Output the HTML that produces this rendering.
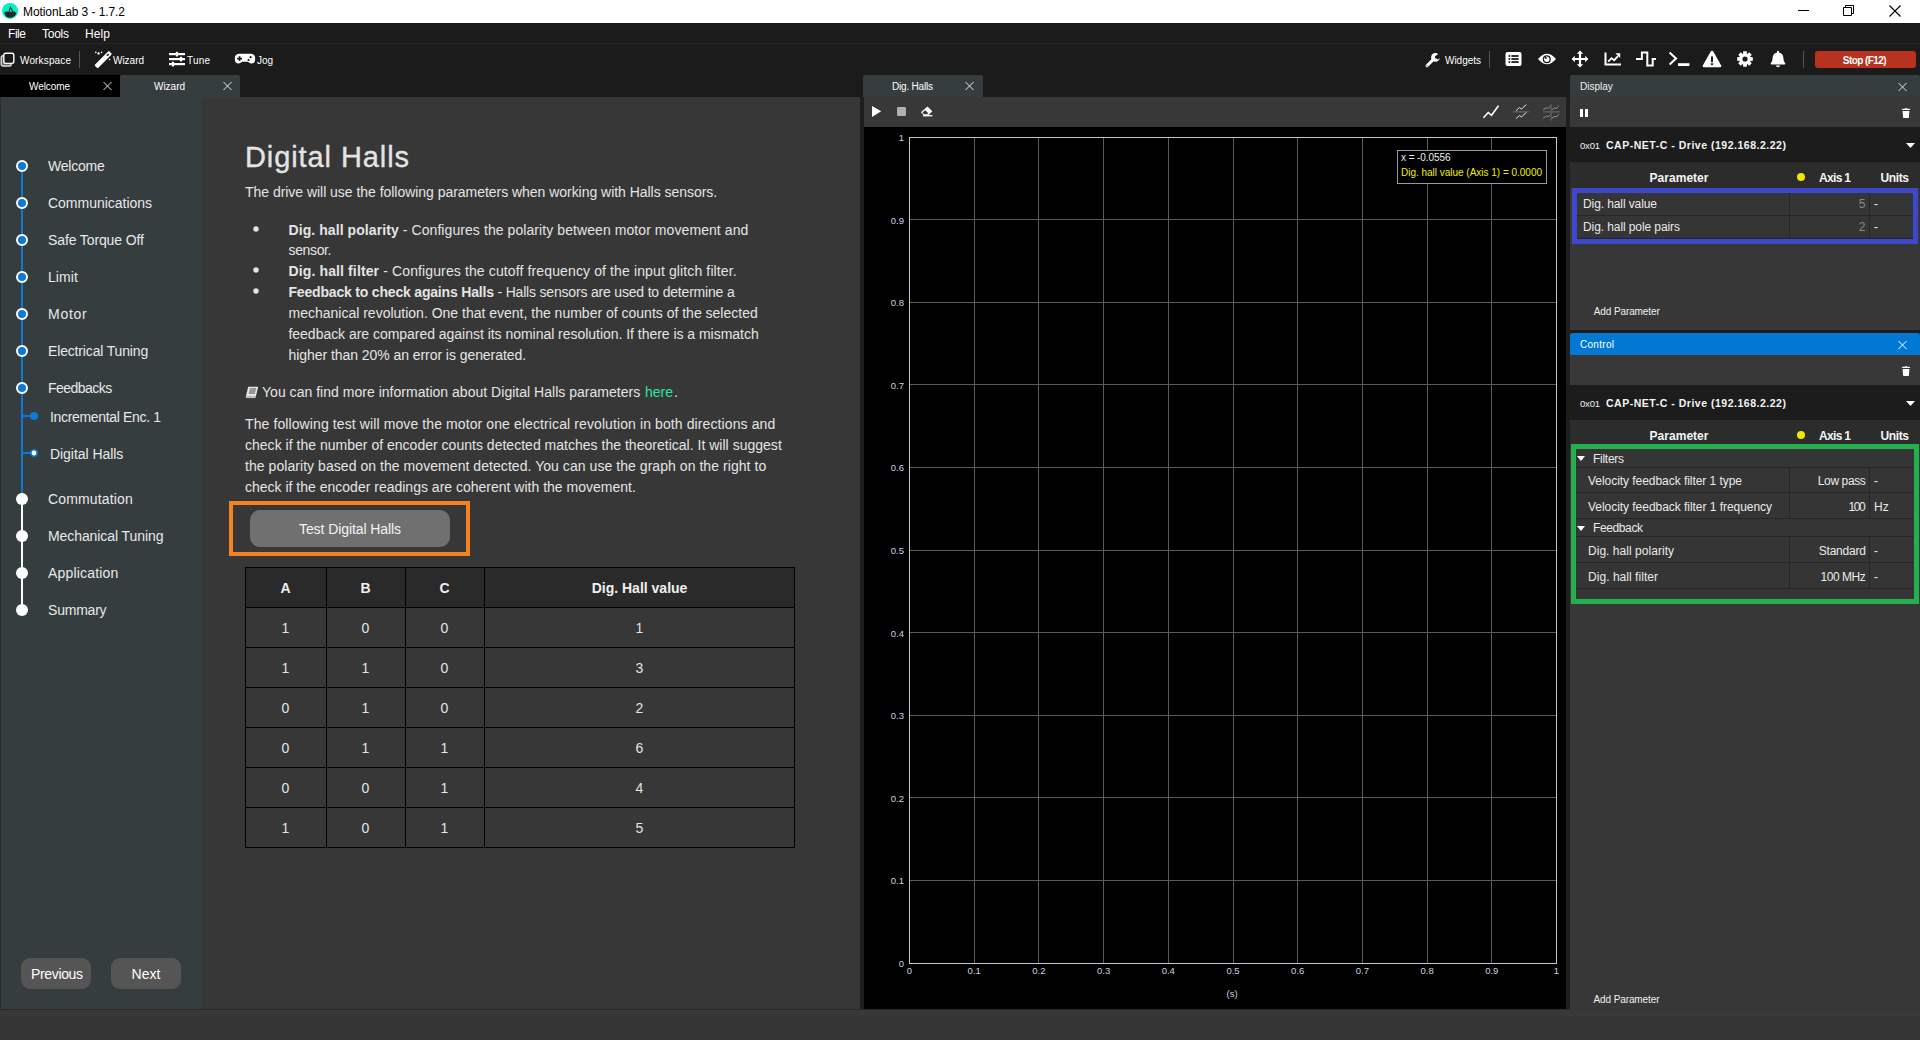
<!DOCTYPE html>
<html><head><meta charset="utf-8">
<style>
*{margin:0;padding:0;box-sizing:border-box}
html,body{width:1920px;height:1040px;overflow:hidden;background:#353535;font-family:"Liberation Sans",sans-serif;color:#e6e6e6}
.a{position:absolute}
.t{position:absolute;white-space:nowrap;line-height:1}
svg{position:absolute;overflow:visible}
b{font-weight:bold}
</style></head><body>
<div class="a" style="left:0px;top:0px;width:1920px;height:23px;background:#fff;"></div>
<svg style="left:2px;top:3px" width="16" height="16" viewBox="0 0 16 16"><circle cx="8" cy="7.9" r="8" fill="#00f0c2"/><path d="M2.2 9.4 L4.4 8.4 L6.5 8.7 L8.4 3.0 L11.5 8.7 L12.9 8.6 L13.3 9.6 L14.6 9.9 Q12.8 14.6 8 14.8 Q3.4 14.6 2.2 9.4Z" fill="#2a2627"/><path d="M8.5 5.6 L10.2 8.7 L7.4 8.7Z" fill="#00f0c2"/></svg>
<div class="t" style="left:23.00px;top:5.84px;font-size:12px;color:#000;letter-spacing:-0.076px;">MotionLab 3 - 1.7.2</div>
<div class="a" style="left:1798px;top:10px;width:11px;height:1px;background:#000;"></div>
<svg style="left:1843px;top:5px" width="12" height="12" viewBox="0 0 12 12"><path d="M0.5 2.5h8v8h-8z M2.5 2.5v-2h8v8h-2" fill="none" stroke="#000" stroke-width="1"/></svg>
<svg style="left:1889px;top:5px" width="12" height="12" viewBox="0 0 12 12"><path d="M0.5 0.5L11.5 11.5M11.5 0.5L0.5 11.5" stroke="#000" stroke-width="1.1"/></svg>
<div class="a" style="left:0px;top:23px;width:1920px;height:21px;background:#1b1b1b;"></div>
<div class="t" style="left:8.00px;top:27.84px;font-size:12px;color:#fff;letter-spacing:-0.448px;">File</div>
<div class="t" style="left:42.00px;top:27.84px;font-size:12px;color:#fff;letter-spacing:-0.254px;">Tools</div>
<div class="t" style="left:85.00px;top:27.84px;font-size:12px;color:#fff;letter-spacing:0.104px;">Help</div>
<div class="a" style="left:0px;top:43px;width:1920px;height:1px;background:#262626;"></div>
<div class="a" style="left:0px;top:44px;width:1920px;height:53px;background:#1b1b1b;"></div>
<svg style="left:0px;top:52px" width="16" height="16" viewBox="0 0 16 16"><rect x="1.2" y="3.8" width="10" height="10.2" rx="1.8" fill="#666" stroke="#ddd" stroke-width="1.4"/><rect x="3.8" y="1.2" width="10" height="10.2" rx="1.8" fill="#1b1b1b" stroke="#fff" stroke-width="1.4"/></svg>
<div class="t" style="left:20.00px;top:55.53px;font-size:10px;color:#fff;letter-spacing:0.146px;">Workspace</div>
<div class="a" style="left:79px;top:51px;width:1px;height:17px;background:#555;"></div>
<svg style="left:94px;top:50px" width="18" height="18" viewBox="0 0 18 18"><g transform="rotate(-45 9.2 9.6)"><rect x="-1" y="7.3" width="20.4" height="4.6" rx="1" fill="#fff"/><rect x="14.6" y="8.8" width="2.4" height="1.6" fill="#1b1b1b"/></g><circle cx="1.8" cy="2.4" r="0.8" fill="#fff"/><circle cx="4.6" cy="3.4" r="1.2" fill="#fff"/><circle cx="7.6" cy="2.4" r="0.8" fill="#fff"/><circle cx="15.6" cy="9.6" r="0.8" fill="#fff"/></svg>
<div class="t" style="left:113.00px;top:55.53px;font-size:10px;color:#fff;letter-spacing:-0.022px;">Wizard</div>
<svg style="left:168px;top:50px" width="18" height="18" viewBox="0 0 18 18"><rect x="1" y="3" width="16" height="2.2" fill="#fff"/><rect x="1" y="8" width="16" height="2.2" fill="#fff"/><rect x="1" y="13" width="16" height="2.2" fill="#fff"/><rect x="7.8" y="1.8" width="2.3" height="4.6" rx="0.6" fill="#fff"/><rect x="11.9" y="6.8" width="2.3" height="4.6" rx="0.6" fill="#fff"/><rect x="3.8" y="11.8" width="2.3" height="4.6" rx="0.6" fill="#fff"/></svg>
<div class="t" style="left:187.00px;top:55.53px;font-size:10px;color:#fff;letter-spacing:0.193px;">Tune</div>
<svg style="left:234px;top:53px" width="22" height="12" viewBox="0 0 22 12"><path d="M5.5 0.8 H16.5 Q21.2 0.8 21.2 5.4 Q21.2 10.6 17.4 10.6 Q15.4 10.6 14 8.8 H8 Q6.6 10.6 4.6 10.6 Q0.8 10.6 0.8 5.4 Q0.8 0.8 5.5 0.8Z" fill="#fff"/><path d="M5.6 3.2v4.8M3.2 5.6h4.8" stroke="#1b1b1b" stroke-width="1.6"/><circle cx="16.6" cy="4.2" r="1.1" fill="#1b1b1b"/><circle cx="14.6" cy="7" r="1.1" fill="#1b1b1b"/></svg>
<div class="t" style="left:257.00px;top:55.53px;font-size:10px;color:#fff;letter-spacing:-0.062px;">Jog</div>
<svg style="left:1424px;top:51.8px" width="17" height="17" viewBox="0 0 17 17"><path d="M3 13.8 L9.4 7.4" stroke="#fff" stroke-width="3" stroke-linecap="round"/><circle cx="11.4" cy="5.4" r="4.3" fill="#fff"/><path d="M11 5 L14.4 1.6 L17.2 4.4 L13.8 7.8Z" fill="#1b1b1b"/><circle cx="12.3" cy="4.9" r="1.5" fill="#1b1b1b"/><circle cx="3" cy="13.8" r="0.6" fill="#1b1b1b"/></svg>
<div class="t" style="left:1445.00px;top:55.53px;font-size:10px;color:#fff;letter-spacing:-0.021px;">Widgets</div>
<div class="a" style="left:1489px;top:51px;width:1px;height:17px;background:#555;"></div>
<svg style="left:1505px;top:52px" width="17" height="14" viewBox="0 0 17 14"><rect x="0.5" y="0" width="16" height="14" rx="2" fill="#fff"/><circle cx="4.4" cy="4" r="1" fill="#1b1b1b"/><circle cx="4.4" cy="7" r="1" fill="#1b1b1b"/><circle cx="4.4" cy="10" r="1" fill="#1b1b1b"/><rect x="6.4" y="3.1" width="7.2" height="1.8" fill="#1b1b1b"/><rect x="6.4" y="6.1" width="7.2" height="1.8" fill="#1b1b1b"/><rect x="6.4" y="9.1" width="7.2" height="1.8" fill="#1b1b1b"/></svg>
<svg style="left:1537px;top:52px" width="20" height="14" viewBox="0 0 20 14"><path d="M1 7 Q10 -3.5 19 7 Q10 17.5 1 7Z" fill="#fff"/><circle cx="9.8" cy="7.2" r="4" fill="#1b1b1b"/><circle cx="9.8" cy="7.2" r="2.7" fill="#fff"/><circle cx="8.8" cy="6" r="1" fill="#1b1b1b"/></svg>
<svg style="left:1571px;top:50px" width="18" height="18" viewBox="0 0 18 18"><path d="M9 0.6 L12.2 3.8 H10.1 V7.9 H14.2 V5.8 L17.4 9 L14.2 12.2 V10.1 H10.1 V14.2 H12.2 L9 17.4 L5.8 14.2 H7.9 V10.1 H3.8 V12.2 L0.6 9 L3.8 5.8 V7.9 H7.9 V3.8 H5.8Z" fill="#fff"/></svg>
<svg style="left:1604px;top:52px" width="18" height="14" viewBox="0 0 18 14"><path d="M1.5 0.5 V12.5 H17" fill="none" stroke="#fff" stroke-width="2"/><path d="M4.2 9.6 L7.6 6.2 L10.2 8.2 L14 4.2" fill="none" stroke="#fff" stroke-width="1.8"/><path d="M11.4 1.2 H16.2 V6 Z" fill="#fff"/></svg>
<svg style="left:1635px;top:51px" width="22" height="16" viewBox="0 0 22 16"><path d="M1 7.9 H6.9 V1.5 H12.3 V14.5 H17.7 V8.1 H21" fill="none" stroke="#fff" stroke-width="2"/></svg>
<svg style="left:1668px;top:51px" width="22" height="16" viewBox="0 0 22 16"><path d="M1.6 1.6 L8 7.6 L1.6 13.6" fill="none" stroke="#fff" stroke-width="2.1"/><rect x="10" y="12.2" width="11.4" height="2.8" fill="#fff"/></svg>
<svg style="left:1702px;top:50px" width="20" height="18" viewBox="0 0 20 18"><path d="M10 0.8 Q10.8 0.8 11.3 1.6 L19.2 15.4 Q19.8 17 18.3 17.2 H1.7 Q0.2 17 0.8 15.4 L8.7 1.6 Q9.2 0.8 10 0.8Z" fill="#fff"/><rect x="9" y="6.2" width="2" height="6" rx="0.8" fill="#1b1b1b"/><circle cx="10" cy="14.2" r="1.1" fill="#1b1b1b"/></svg>
<svg style="left:1737px;top:51px" width="16" height="16" viewBox="0 0 16 16"><path d="M15.81 6.25 L15.81 9.75 L13.24 9.97 L13.10 10.31 L14.76 12.29 L12.29 14.76 L10.31 13.10 L9.97 13.24 L9.75 15.81 L6.25 15.81 L6.03 13.24 L5.69 13.10 L3.71 14.76 L1.24 12.29 L2.90 10.31 L2.76 9.97 L0.19 9.75 L0.19 6.25 L2.76 6.03 L2.90 5.69 L1.24 3.71 L3.71 1.24 L5.69 2.90 L6.03 2.76 L6.25 0.19 L9.75 0.19 L9.97 2.76 L10.31 2.90 L12.29 1.24 L14.76 3.71 L13.10 5.69 L13.24 6.03Z" fill="#fff"/><circle cx="8" cy="8" r="2.6" fill="#1b1b1b"/></svg>
<svg style="left:1770px;top:50px" width="16" height="18" viewBox="0 0 16 18"><path d="M8 0.8 Q9 0.8 9 2 V2.4 Q13.2 3.2 13.4 8 Q13.4 11.8 15.2 13.2 Q15.6 14.2 14.6 14.4 H1.4 Q0.4 14.2 0.8 13.2 Q2.6 11.8 2.6 8 Q2.8 3.2 7 2.4 V2 Q7 0.8 8 0.8Z" fill="#fff"/><path d="M5.8 15.4 H10.2 Q9.6 17.2 8 17.2 Q6.4 17.2 5.8 15.4Z" fill="#fff"/></svg>
<div class="a" style="left:1803px;top:51px;width:1px;height:17px;background:#555;"></div>
<div class="a" style="left:1815px;top:51px;width:101px;height:17px;background:#b8321f;border-radius:3px"></div>
<div class="t" style="left:1842.80px;top:55.83px;font-size:10px;color:#fff;letter-spacing:-0.566px;font-weight:bold;">Stop (F12)</div>
<div class="a" style="left:0px;top:75px;width:120px;height:22px;background:#000;"></div>
<div class="t" style="left:29.00px;top:81.53px;font-size:10px;color:#fff;letter-spacing:-0.081px;">Welcome</div>
<svg style="left:103px;top:81px" width="9" height="9" viewBox="0 0 9 9"><path d="M0.5 1L8.5 9M8.5 1L0.5 9" stroke="#e8e8e8" stroke-width="1.0"/></svg>
<div class="a" style="left:120px;top:75px;width:120px;height:22px;background:#363d3f;border-radius:2px 2px 0 0"></div>
<div class="t" style="left:154.00px;top:81.53px;font-size:10px;color:#fff;letter-spacing:-0.022px;">Wizard</div>
<svg style="left:223px;top:81px" width="9" height="9" viewBox="0 0 9 9"><path d="M0.5 1L8.5 9M8.5 1L0.5 9" stroke="#e8e8e8" stroke-width="1.0"/></svg>
<div class="a" style="left:0px;top:97px;width:860px;height:912px;background:#373737;"></div>
<div class="a" style="left:1px;top:97px;width:200px;height:912px;background:#363d3f;"></div>
<div class="a" style="left:0px;top:97px;width:1px;height:912px;background:#2b2b2b;"></div>
<div class="a" style="left:21px;top:166px;width:2px;height:327px;background:#0a7ad6;"></div>
<div class="a" style="left:21px;top:493px;width:2px;height:117px;background:#fff;"></div>
<svg style="left:16px;top:160px" width="12" height="12" viewBox="0 0 12 12"><circle cx="6" cy="6" r="5" fill="#0a7ad6" stroke="#fff" stroke-width="2"/></svg>
<div class="t" style="left:48.00px;top:159.15px;font-size:14px;color:#e8e8e8;letter-spacing:-0.213px;">Welcome</div>
<svg style="left:16px;top:197px" width="12" height="12" viewBox="0 0 12 12"><circle cx="6" cy="6" r="5" fill="#0a7ad6" stroke="#fff" stroke-width="2"/></svg>
<div class="t" style="left:48.00px;top:196.15px;font-size:14px;color:#e8e8e8;letter-spacing:-0.017px;">Communications</div>
<svg style="left:16px;top:234px" width="12" height="12" viewBox="0 0 12 12"><circle cx="6" cy="6" r="5" fill="#0a7ad6" stroke="#fff" stroke-width="2"/></svg>
<div class="t" style="left:48.00px;top:233.15px;font-size:14px;color:#e8e8e8;letter-spacing:-0.117px;">Safe Torque Off</div>
<svg style="left:16px;top:271px" width="12" height="12" viewBox="0 0 12 12"><circle cx="6" cy="6" r="5" fill="#0a7ad6" stroke="#fff" stroke-width="2"/></svg>
<div class="t" style="left:48.00px;top:270.15px;font-size:14px;color:#e8e8e8;letter-spacing:0.088px;">Limit</div>
<svg style="left:16px;top:308px" width="12" height="12" viewBox="0 0 12 12"><circle cx="6" cy="6" r="5" fill="#0a7ad6" stroke="#fff" stroke-width="2"/></svg>
<div class="t" style="left:48.00px;top:307.15px;font-size:14px;color:#e8e8e8;letter-spacing:0.734px;">Motor</div>
<svg style="left:16px;top:345px" width="12" height="12" viewBox="0 0 12 12"><circle cx="6" cy="6" r="5" fill="#0a7ad6" stroke="#fff" stroke-width="2"/></svg>
<div class="t" style="left:48.00px;top:344.15px;font-size:14px;color:#e8e8e8;letter-spacing:-0.155px;">Electrical Tuning</div>
<svg style="left:16px;top:382px" width="12" height="12" viewBox="0 0 12 12"><circle cx="6" cy="6" r="5" fill="#0a7ad6" stroke="#fff" stroke-width="2"/></svg>
<div class="t" style="left:48.00px;top:381.15px;font-size:14px;color:#e8e8e8;letter-spacing:-0.532px;">Feedbacks</div>
<svg style="left:16px;top:493px" width="12" height="12" viewBox="0 0 12 12"><circle cx="6" cy="6" r="6" fill="#fff"/></svg>
<div class="t" style="left:48.00px;top:492.15px;font-size:14px;color:#e8e8e8;letter-spacing:0.148px;">Commutation</div>
<svg style="left:16px;top:530px" width="12" height="12" viewBox="0 0 12 12"><circle cx="6" cy="6" r="6" fill="#fff"/></svg>
<div class="t" style="left:48.00px;top:529.15px;font-size:14px;color:#e8e8e8;letter-spacing:-0.080px;">Mechanical Tuning</div>
<svg style="left:16px;top:567px" width="12" height="12" viewBox="0 0 12 12"><circle cx="6" cy="6" r="6" fill="#fff"/></svg>
<div class="t" style="left:48.00px;top:566.15px;font-size:14px;color:#e8e8e8;letter-spacing:0.173px;">Application</div>
<svg style="left:16px;top:604px" width="12" height="12" viewBox="0 0 12 12"><circle cx="6" cy="6" r="6" fill="#fff"/></svg>
<div class="t" style="left:48.00px;top:603.15px;font-size:14px;color:#e8e8e8;letter-spacing:-0.212px;">Summary</div>
<div class="a" style="left:22px;top:415px;width:9px;height:2px;background:#0a7ad6;"></div>
<svg style="left:30px;top:412px" width="8" height="8" viewBox="0 0 8 8"><circle cx="4" cy="4" r="4" fill="#0a7ad6"/></svg>
<div class="t" style="left:50.00px;top:410.15px;font-size:14px;color:#e8e8e8;letter-spacing:-0.335px;">Incremental Enc. 1</div>
<div class="a" style="left:22px;top:452px;width:9px;height:2px;background:#0a7ad6;"></div>
<svg style="left:30px;top:449px" width="8" height="8" viewBox="0 0 8 8"><circle cx="4" cy="4" r="3.2" fill="#fff" stroke="#0a7ad6" stroke-width="1.6"/></svg>
<div class="t" style="left:50.00px;top:447.15px;font-size:14px;color:#e8e8e8;letter-spacing:-0.049px;">Digital Halls</div>
<div class="a" style="left:21px;top:958px;width:70px;height:31px;background:#555555;border-radius:9px"></div>
<div class="t" style="left:31.00px;top:967.15px;font-size:14px;color:#fff;letter-spacing:-0.350px;">Previous</div>
<div class="a" style="left:111px;top:958px;width:70px;height:31px;background:#555555;border-radius:9px"></div>
<div class="t" style="left:131.50px;top:967.15px;font-size:14px;color:#fff;letter-spacing:0.073px;">Next</div>
<div class="t" style="left:245.00px;top:142.65px;font-size:29px;color:#e4e4e4;letter-spacing:0.911px;-webkit-text-stroke:0.35px #e4e4e4;">Digital Halls</div>
<div class="t" style="left:245.00px;top:185.15px;font-size:14px;color:#e4e4e4;letter-spacing:-0.033px;">The drive will use the following parameters when working with Halls sensors.</div>
<svg style="left:252.5px;top:225.5px" width="6" height="6" viewBox="0 0 6 6"><circle cx="3" cy="3" r="2.7" fill="#e4e4e4"/></svg>
<svg style="left:252.5px;top:267px" width="6" height="6" viewBox="0 0 6 6"><circle cx="3" cy="3" r="2.7" fill="#e4e4e4"/></svg>
<svg style="left:252.5px;top:288px" width="6" height="6" viewBox="0 0 6 6"><circle cx="3" cy="3" r="2.7" fill="#e4e4e4"/></svg>
<div class="t" style="left:288.50px;top:222.65px;font-size:14px;color:#e4e4e4;letter-spacing:0.077px;"><b>Dig. hall polarity</b> - Configures the polarity between motor movement and</div>
<div class="t" style="left:288.50px;top:243.15px;font-size:14px;color:#e4e4e4;letter-spacing:-0.354px;">sensor.</div>
<div class="t" style="left:288.50px;top:264.15px;font-size:14px;color:#e4e4e4;letter-spacing:0.124px;"><b>Dig. hall filter</b> - Configures the cutoff frequency of the input glitch filter.</div>
<div class="t" style="left:288.50px;top:285.15px;font-size:14px;color:#e4e4e4;letter-spacing:-0.187px;"><b>Feedback to check agains Halls</b> - Halls sensors are used to determine a</div>
<div class="t" style="left:288.50px;top:306.15px;font-size:14px;color:#e4e4e4;letter-spacing:-0.001px;">mechanical revolution. One that event, the number of counts of the selected</div>
<div class="t" style="left:288.50px;top:327.15px;font-size:14px;color:#e4e4e4;letter-spacing:-0.029px;">feedback are compared against its nominal resolution. If there is a mismatch</div>
<div class="t" style="left:288.50px;top:348.15px;font-size:14px;color:#e4e4e4;letter-spacing:-0.057px;">higher than 20% an error is generated.</div>
<svg style="left:245px;top:386px" width="14" height="12" viewBox="0 0 14 12"><path d="M3.2 0.8 H13.2 L10.8 10.8 H0.8 Z" fill="#e4e4e4"/><path d="M4.8 3 H11 M4.3 5 H10.5 M3.8 7 H10" stroke="#373737" stroke-width="0.9"/><path d="M1.2 10.8 Q0.6 11.6 1.8 11.6 H10.6" fill="none" stroke="#e4e4e4" stroke-width="0.9"/></svg>
<div class="t" style="left:262.00px;top:385.15px;font-size:14px;color:#e4e4e4;letter-spacing:0.023px;">You can find more information about Digital Halls parameters </div>
<div class="t" style="left:645.00px;top:385.15px;font-size:14px;color:#2ee5a0;">here</div>
<div class="t" style="left:674.00px;top:385.15px;font-size:14px;color:#e4e4e4;">.</div>
<div class="t" style="left:245.00px;top:416.90px;font-size:14px;color:#e4e4e4;letter-spacing:0.103px;">The following test will move the motor one electrical revolution in both directions and</div>
<div class="t" style="left:245.00px;top:437.80px;font-size:14px;color:#e4e4e4;letter-spacing:0.016px;">check if the number of encoder counts detected matches the theoretical. It will suggest</div>
<div class="t" style="left:245.00px;top:458.70px;font-size:14px;color:#e4e4e4;letter-spacing:0.054px;">the polarity based on the movement detected. You can use the graph on the right to</div>
<div class="t" style="left:245.00px;top:479.60px;font-size:14px;color:#e4e4e4;letter-spacing:0.002px;">check if the encoder readings are coherent with the movement.</div>
<div class="a" style="left:229px;top:501px;width:241px;height:55px;background:transparent;border:4px solid #f58220"></div>
<div class="a" style="left:250px;top:510px;width:200px;height:37px;background:#707070;border-radius:10px"></div>
<div class="t" style="left:299.00px;top:522.15px;font-size:14px;color:#f4f4f4;letter-spacing:-0.085px;">Test Digital Halls</div>
<div class="a" style="left:245px;top:567px;width:550px;height:40px;background:#2a2a2a;"></div>
<div class="a" style="left:245px;top:567px;width:550px;height:1px;background:#000;"></div>
<div class="a" style="left:245px;top:607px;width:550px;height:1px;background:#000;"></div>
<div class="a" style="left:245px;top:647px;width:550px;height:1px;background:#000;"></div>
<div class="a" style="left:245px;top:687px;width:550px;height:1px;background:#000;"></div>
<div class="a" style="left:245px;top:727px;width:550px;height:1px;background:#000;"></div>
<div class="a" style="left:245px;top:767px;width:550px;height:1px;background:#000;"></div>
<div class="a" style="left:245px;top:807px;width:550px;height:1px;background:#000;"></div>
<div class="a" style="left:245px;top:847px;width:550px;height:1px;background:#000;"></div>
<div class="a" style="left:245px;top:567px;width:1px;height:281px;background:#000;"></div>
<div class="a" style="left:326px;top:567px;width:1px;height:281px;background:#000;"></div>
<div class="a" style="left:405px;top:567px;width:1px;height:281px;background:#000;"></div>
<div class="a" style="left:484px;top:567px;width:1px;height:281px;background:#000;"></div>
<div class="a" style="left:794px;top:567px;width:1px;height:281px;background:#000;"></div>
<div class="t" style="left:280.45px;top:581.15px;font-size:14px;color:#f0f0f0;font-weight:bold;">A</div>
<div class="t" style="left:360.45px;top:581.15px;font-size:14px;color:#f0f0f0;font-weight:bold;">B</div>
<div class="t" style="left:439.45px;top:581.15px;font-size:14px;color:#f0f0f0;font-weight:bold;">C</div>
<div class="t" style="left:591.66px;top:581.15px;font-size:14px;color:#f0f0f0;font-weight:bold;">Dig. Hall value</div>
<div class="t" style="left:281.61px;top:621.15px;font-size:14px;color:#e4e4e4;">1</div>
<div class="t" style="left:361.61px;top:621.15px;font-size:14px;color:#e4e4e4;">0</div>
<div class="t" style="left:440.61px;top:621.15px;font-size:14px;color:#e4e4e4;">0</div>
<div class="t" style="left:635.61px;top:621.15px;font-size:14px;color:#e4e4e4;">1</div>
<div class="t" style="left:281.61px;top:661.15px;font-size:14px;color:#e4e4e4;">1</div>
<div class="t" style="left:361.61px;top:661.15px;font-size:14px;color:#e4e4e4;">1</div>
<div class="t" style="left:440.61px;top:661.15px;font-size:14px;color:#e4e4e4;">0</div>
<div class="t" style="left:635.61px;top:661.15px;font-size:14px;color:#e4e4e4;">3</div>
<div class="t" style="left:281.61px;top:701.15px;font-size:14px;color:#e4e4e4;">0</div>
<div class="t" style="left:361.61px;top:701.15px;font-size:14px;color:#e4e4e4;">1</div>
<div class="t" style="left:440.61px;top:701.15px;font-size:14px;color:#e4e4e4;">0</div>
<div class="t" style="left:635.61px;top:701.15px;font-size:14px;color:#e4e4e4;">2</div>
<div class="t" style="left:281.61px;top:741.15px;font-size:14px;color:#e4e4e4;">0</div>
<div class="t" style="left:361.61px;top:741.15px;font-size:14px;color:#e4e4e4;">1</div>
<div class="t" style="left:440.61px;top:741.15px;font-size:14px;color:#e4e4e4;">1</div>
<div class="t" style="left:635.61px;top:741.15px;font-size:14px;color:#e4e4e4;">6</div>
<div class="t" style="left:281.61px;top:781.15px;font-size:14px;color:#e4e4e4;">0</div>
<div class="t" style="left:361.61px;top:781.15px;font-size:14px;color:#e4e4e4;">0</div>
<div class="t" style="left:440.61px;top:781.15px;font-size:14px;color:#e4e4e4;">1</div>
<div class="t" style="left:635.61px;top:781.15px;font-size:14px;color:#e4e4e4;">4</div>
<div class="t" style="left:281.61px;top:821.15px;font-size:14px;color:#e4e4e4;">1</div>
<div class="t" style="left:361.61px;top:821.15px;font-size:14px;color:#e4e4e4;">0</div>
<div class="t" style="left:440.61px;top:821.15px;font-size:14px;color:#e4e4e4;">1</div>
<div class="t" style="left:635.61px;top:821.15px;font-size:14px;color:#e4e4e4;">5</div>
<div class="a" style="left:860px;top:97px;width:4px;height:912px;background:#1e1e1e;"></div>
<div class="a" style="left:863px;top:75px;width:120px;height:22px;background:#363d3f;border-radius:2px 2px 0 0"></div>
<div class="t" style="left:892.00px;top:81.53px;font-size:10px;color:#fff;letter-spacing:-0.198px;">Dig. Halls</div>
<svg style="left:965px;top:81px" width="9" height="9" viewBox="0 0 9 9"><path d="M0.5 1L8.5 9M8.5 1L0.5 9" stroke="#e8e8e8" stroke-width="1.0"/></svg>
<div class="a" style="left:864px;top:97px;width:702px;height:30px;background:#383838;"></div>
<svg style="left:871px;top:105px" width="11" height="13" viewBox="0 0 11 13"><path d="M1 0.9 L10.2 6.3 L1 12Z" fill="#fff"/></svg>
<div class="a" style="left:897px;top:106.5px;width:9.2px;height:9.7px;background:#b0b0b0;border-radius:1.2px"></div>
<svg style="left:920px;top:106px" width="13" height="11" viewBox="0 0 13 11"><path d="M7.5 0.5 L12.3 5.3 L8.4 9.3 L3.9 9.3 L0.9 6.3 Z" fill="#fff"/><path d="M5.4 4.3 L8.3 7.2 L7.2 8.2 L4.2 8.2 L2.3 6.4 Z" fill="#383838"/><rect x="3" y="9.1" width="9.4" height="1.3" fill="#fff"/></svg>
<svg style="left:1482px;top:104px" width="18" height="15" viewBox="0 0 18 15"><path d="M1.5 13.7 L6.2 8.5 L9.5 11.3 L16.5 1.7" fill="none" stroke="#fff" stroke-width="1.6"/></svg>
<svg style="left:1512px;top:103px" width="18" height="18" viewBox="0 0 18 18"><rect x="1" y="8" width="16" height="1.6" fill="#5a5a5a"/><path d="M4 7.7 L7.6 4.4 L9.2 6.2 L14.4 1.6 M4 15.6 L7.6 12.3 L9.2 14.1 L14.4 9.5" fill="none" stroke="#e0e0e0" stroke-width="1"/></svg>
<svg style="left:1542px;top:103px" width="18" height="18" viewBox="0 0 18 18"><rect x="1" y="8" width="17" height="1.6" fill="#5a5a5a"/><rect x="8.3" y="1" width="1.6" height="16.6" fill="#5a5a5a"/><path d="M1.2 6.8 L4.4 4.6 L6 5.6 L8 3.3 M10 6.6 L13 4.8 L14.5 5.5 L16.8 2.8 M1.2 15.3 L4.4 13.1 L6 14.1 L8 11.8 M10 15.1 L13 13.3 L14.5 14 L16.8 11.3" fill="none" stroke="#9a9a9a" stroke-width="0.9"/></svg>
<div class="a" style="left:864px;top:127px;width:702px;height:882px;background:#000;"></div>
<div class="a" style="left:974px;top:137px;width:1px;height:826px;background:#5c5c5c"></div>
<div class="a" style="left:909px;top:219px;width:647px;height:1px;background:#5c5c5c"></div>
<div class="a" style="left:1038px;top:137px;width:1px;height:826px;background:#5c5c5c"></div>
<div class="a" style="left:909px;top:302px;width:647px;height:1px;background:#5c5c5c"></div>
<div class="a" style="left:1103px;top:137px;width:1px;height:826px;background:#5c5c5c"></div>
<div class="a" style="left:909px;top:384px;width:647px;height:1px;background:#5c5c5c"></div>
<div class="a" style="left:1168px;top:137px;width:1px;height:826px;background:#5c5c5c"></div>
<div class="a" style="left:909px;top:467px;width:647px;height:1px;background:#5c5c5c"></div>
<div class="a" style="left:1233px;top:137px;width:1px;height:826px;background:#5c5c5c"></div>
<div class="a" style="left:909px;top:550px;width:647px;height:1px;background:#5c5c5c"></div>
<div class="a" style="left:1297px;top:137px;width:1px;height:826px;background:#5c5c5c"></div>
<div class="a" style="left:909px;top:632px;width:647px;height:1px;background:#5c5c5c"></div>
<div class="a" style="left:1362px;top:137px;width:1px;height:826px;background:#5c5c5c"></div>
<div class="a" style="left:909px;top:715px;width:647px;height:1px;background:#5c5c5c"></div>
<div class="a" style="left:1427px;top:137px;width:1px;height:826px;background:#5c5c5c"></div>
<div class="a" style="left:909px;top:797px;width:647px;height:1px;background:#5c5c5c"></div>
<div class="a" style="left:1491px;top:137px;width:1px;height:826px;background:#5c5c5c"></div>
<div class="a" style="left:909px;top:880px;width:647px;height:1px;background:#5c5c5c"></div>
<div class="a" style="left:909px;top:137px;width:648px;height:827px;border:1px solid #c8c8c8"></div>
<div class="t" style="left:898.72px;top:958.96px;font-size:9.5px;color:#c9d3e6;">0</div>
<div class="t" style="left:906.86px;top:965.96px;font-size:9.5px;color:#c9d3e6;">0</div>
<div class="t" style="left:890.80px;top:876.36px;font-size:9.5px;color:#c9d3e6;">0.1</div>
<div class="t" style="left:967.60px;top:965.96px;font-size:9.5px;color:#c9d3e6;">0.1</div>
<div class="t" style="left:890.80px;top:793.76px;font-size:9.5px;color:#c9d3e6;">0.2</div>
<div class="t" style="left:1032.30px;top:965.96px;font-size:9.5px;color:#c9d3e6;">0.2</div>
<div class="t" style="left:890.80px;top:711.16px;font-size:9.5px;color:#c9d3e6;">0.3</div>
<div class="t" style="left:1097.00px;top:965.96px;font-size:9.5px;color:#c9d3e6;">0.3</div>
<div class="t" style="left:890.80px;top:628.56px;font-size:9.5px;color:#c9d3e6;">0.4</div>
<div class="t" style="left:1161.70px;top:965.96px;font-size:9.5px;color:#c9d3e6;">0.4</div>
<div class="t" style="left:890.80px;top:545.96px;font-size:9.5px;color:#c9d3e6;">0.5</div>
<div class="t" style="left:1226.40px;top:965.96px;font-size:9.5px;color:#c9d3e6;">0.5</div>
<div class="t" style="left:890.80px;top:463.36px;font-size:9.5px;color:#c9d3e6;">0.6</div>
<div class="t" style="left:1291.10px;top:965.96px;font-size:9.5px;color:#c9d3e6;">0.6</div>
<div class="t" style="left:890.80px;top:380.76px;font-size:9.5px;color:#c9d3e6;">0.7</div>
<div class="t" style="left:1355.80px;top:965.96px;font-size:9.5px;color:#c9d3e6;">0.7</div>
<div class="t" style="left:890.80px;top:298.16px;font-size:9.5px;color:#c9d3e6;">0.8</div>
<div class="t" style="left:1420.50px;top:965.96px;font-size:9.5px;color:#c9d3e6;">0.8</div>
<div class="t" style="left:890.80px;top:215.56px;font-size:9.5px;color:#c9d3e6;">0.9</div>
<div class="t" style="left:1485.20px;top:965.96px;font-size:9.5px;color:#c9d3e6;">0.9</div>
<div class="t" style="left:898.72px;top:132.96px;font-size:9.5px;color:#c9d3e6;">1</div>
<div class="t" style="left:1553.86px;top:965.96px;font-size:9.5px;color:#c9d3e6;">1</div>
<div class="t" style="left:1226.47px;top:989.46px;font-size:9.5px;color:#c9d3e6;">(s)</div>
<div class="a" style="left:1397px;top:150px;width:150px;height:34px;background:#000;border:1px solid #9a9a9a"></div>
<div class="t" style="left:1401.00px;top:152.53px;font-size:10px;color:#eeeeee;letter-spacing:-0.073px;">x = -0.0556</div>
<div class="t" style="left:1401.00px;top:167.53px;font-size:10px;color:#f0f000;letter-spacing:-0.015px;">Dig. hall value (Axis 1) = 0.0000</div>
<div class="a" style="left:1566px;top:97px;width:4px;height:912px;background:#1e1e1e;"></div>
<div class="a" style="left:1570px;top:75px;width:350px;height:22px;background:#363d3f;border-radius:2px 2px 0 0"></div>
<div class="t" style="left:1580.00px;top:82.03px;font-size:10px;color:#f0f0f0;">Display</div>
<svg style="left:1898px;top:82px" width="9" height="9" viewBox="0 0 9 9"><path d="M0.5 1L8.5 9M8.5 1L0.5 9" stroke="#e0e0e0" stroke-width="1.0"/></svg>
<div class="a" style="left:1570px;top:97px;width:350px;height:30px;background:#383838;"></div>
<div class="a" style="left:1580px;top:109px;width:3px;height:8px;background:#fff;border-radius:0.5px"></div>
<div class="a" style="left:1585px;top:109px;width:3px;height:8px;background:#fff;border-radius:0.5px"></div>
<svg style="left:1902px;top:108px" width="8" height="10" viewBox="0 0 8 10"><path d="M0 1.4 Q0 0.8 0.8 0.8 H2.8 Q3.2 0 4 0 Q4.8 0 5.2 0.8 H7.2 Q8 0.8 8 1.4 V2 H0Z" fill="#fff"/><path d="M0.6 3 H7.4 L6.9 9.6 Q6.85 10 6.4 10 H1.6 Q1.15 10 1.1 9.6Z" fill="#fff"/></svg>
<div class="a" style="left:1566px;top:127px;width:354px;height:35px;background:#1c1c1c;"></div>
<div class="t" style="left:1580.00px;top:140.96px;font-size:9.5px;color:#f0f0f0;letter-spacing:-0.198px;">0x01</div>
<div class="t" style="left:1606.00px;top:140.11px;font-size:10.5px;color:#f4f4f4;letter-spacing:0.515px;font-weight:bold;">CAP-NET-C - Drive (192.168.2.22)</div>
<svg style="left:1906px;top:143px" width="9" height="5" viewBox="0 0 9 5"><path d="M0 0 H9 L4.5 5Z" fill="#fff"/></svg>
<div class="a" style="left:1570px;top:162px;width:350px;height:26px;background:#2c2c2c;"></div>
<div class="t" style="left:1649.50px;top:171.84px;font-size:12px;color:#f4f4f4;letter-spacing:0.037px;font-weight:bold;">Parameter</div>
<svg style="left:1797px;top:173px" width="8" height="8" viewBox="0 0 8 8"><circle cx="4" cy="4" r="4" fill="#f2e600"/></svg>
<div class="t" style="left:1819.00px;top:171.84px;font-size:12px;color:#f4f4f4;letter-spacing:-0.669px;font-weight:bold;">Axis 1</div>
<div class="t" style="left:1880.50px;top:171.84px;font-size:12px;color:#f4f4f4;letter-spacing:-0.375px;font-weight:bold;">Units</div>
<div class="a" style="left:1570px;top:188px;width:350px;height:142px;background:#373737;border-radius:0 0 3px 3px"></div>
<div class="a" style="left:1577px;top:193px;width:336px;height:23px;background:#353535;"></div>
<div class="a" style="left:1577px;top:215px;width:336px;height:1px;background:#262626;"></div>
<div class="a" style="left:1789px;top:193px;width:1px;height:23px;background:#262626;"></div>
<div class="a" style="left:1869px;top:193px;width:1px;height:23px;background:#262626;"></div>
<div class="t" style="left:1583.00px;top:197.84px;font-size:12px;color:#eaeaea;letter-spacing:-0.098px;">Dig. hall value</div>
<div class="t" style="left:1858.83px;top:197.84px;font-size:12px;color:#8a8a8a;">5</div>
<div class="t" style="left:1874.00px;top:197.84px;font-size:12px;color:#eaeaea;">-</div>
<div class="a" style="left:1577px;top:216px;width:336px;height:23px;background:#353535;"></div>
<div class="a" style="left:1577px;top:238px;width:336px;height:1px;background:#262626;"></div>
<div class="a" style="left:1789px;top:216px;width:1px;height:23px;background:#262626;"></div>
<div class="a" style="left:1869px;top:216px;width:1px;height:23px;background:#262626;"></div>
<div class="t" style="left:1583.00px;top:220.84px;font-size:12px;color:#eaeaea;letter-spacing:-0.090px;">Dig. hall pole pairs</div>
<div class="t" style="left:1858.83px;top:220.84px;font-size:12px;color:#8a8a8a;">2</div>
<div class="t" style="left:1874.00px;top:220.84px;font-size:12px;color:#eaeaea;">-</div>
<div class="a" style="left:1572px;top:188px;width:346px;height:56px;background:transparent;border:5px solid #3f47cc"></div>
<div class="t" style="left:1593.75px;top:306.54px;font-size:10px;color:#f0f0f0;letter-spacing:-0.105px;">Add Parameter</div>
<div class="a" style="left:1570px;top:330px;width:350px;height:3px;background:#1c1c1c;"></div>
<div class="a" style="left:1570px;top:333px;width:350px;height:22px;background:#0078d4;border-radius:3px 3px 0 0"></div>
<div class="t" style="left:1580.00px;top:339.54px;font-size:10px;color:#fff;letter-spacing:0.294px;">Control</div>
<svg style="left:1898px;top:340px" width="9" height="9" viewBox="0 0 9 9"><path d="M0.5 1L8.5 9M8.5 1L0.5 9" stroke="#fff" stroke-width="1.0"/></svg>
<div class="a" style="left:1570px;top:355px;width:350px;height:30px;background:#383838;"></div>
<svg style="left:1902px;top:366px" width="8" height="10" viewBox="0 0 8 10"><path d="M0 1.4 Q0 0.8 0.8 0.8 H2.8 Q3.2 0 4 0 Q4.8 0 5.2 0.8 H7.2 Q8 0.8 8 1.4 V2 H0Z" fill="#fff"/><path d="M0.6 3 H7.4 L6.9 9.6 Q6.85 10 6.4 10 H1.6 Q1.15 10 1.1 9.6Z" fill="#fff"/></svg>
<div class="a" style="left:1566px;top:385px;width:354px;height:35px;background:#1c1c1c;"></div>
<div class="t" style="left:1580.00px;top:398.96px;font-size:9.5px;color:#f0f0f0;letter-spacing:-0.198px;">0x01</div>
<div class="t" style="left:1606.00px;top:398.11px;font-size:10.5px;color:#f4f4f4;letter-spacing:0.515px;font-weight:bold;">CAP-NET-C - Drive (192.168.2.22)</div>
<svg style="left:1906px;top:401px" width="9" height="5" viewBox="0 0 9 5"><path d="M0 0 H9 L4.5 5Z" fill="#fff"/></svg>
<div class="a" style="left:1570px;top:420px;width:350px;height:25px;background:#2c2c2c;"></div>
<div class="t" style="left:1649.50px;top:429.84px;font-size:12px;color:#f4f4f4;letter-spacing:0.037px;font-weight:bold;">Parameter</div>
<svg style="left:1797px;top:431px" width="8" height="8" viewBox="0 0 8 8"><circle cx="4" cy="4" r="4" fill="#f2e600"/></svg>
<div class="t" style="left:1819.00px;top:429.84px;font-size:12px;color:#f4f4f4;letter-spacing:-0.669px;font-weight:bold;">Axis 1</div>
<div class="t" style="left:1880.50px;top:429.84px;font-size:12px;color:#f4f4f4;letter-spacing:-0.375px;font-weight:bold;">Units</div>
<div class="a" style="left:1570px;top:445px;width:350px;height:564px;background:#373737;"></div>
<div class="a" style="left:1576px;top:449px;width:339px;height:150px;background:#353535;"></div>
<div class="a" style="left:1576px;top:467px;width:339px;height:1px;background:#262626;"></div>
<svg style="left:1577px;top:456px" width="8" height="5" viewBox="0 0 8 5"><path d="M0 0 H8 L4 5Z" fill="#fff"/></svg>
<div class="t" style="left:1593.00px;top:452.84px;font-size:12px;color:#eaeaea;letter-spacing:-0.279px;">Filters</div>
<div class="a" style="left:1576px;top:492px;width:339px;height:1px;background:#262626;"></div>
<div class="a" style="left:1789px;top:468px;width:1px;height:25px;background:#262626;"></div>
<div class="a" style="left:1869px;top:468px;width:1px;height:25px;background:#262626;"></div>
<div class="t" style="left:1588.00px;top:474.84px;font-size:12px;color:#eaeaea;letter-spacing:-0.046px;">Velocity feedback filter 1 type</div>
<div class="t" style="left:1817.80px;top:474.84px;font-size:12px;color:#eaeaea;letter-spacing:-0.384px;">Low pass</div>
<div class="t" style="left:1874.00px;top:474.84px;font-size:12px;color:#eaeaea;">-</div>
<div class="a" style="left:1576px;top:518px;width:339px;height:1px;background:#262626;"></div>
<div class="a" style="left:1789px;top:493px;width:1px;height:26px;background:#262626;"></div>
<div class="a" style="left:1869px;top:493px;width:1px;height:26px;background:#262626;"></div>
<div class="t" style="left:1588.00px;top:500.84px;font-size:12px;color:#eaeaea;letter-spacing:-0.040px;">Velocity feedback filter 1 frequency</div>
<div class="t" style="left:1848.40px;top:500.84px;font-size:12px;color:#eaeaea;letter-spacing:-1.308px;">100</div>
<div class="t" style="left:1874.00px;top:500.84px;font-size:12px;color:#eaeaea;">Hz</div>
<div class="a" style="left:1576px;top:536px;width:339px;height:1px;background:#262626;"></div>
<svg style="left:1577px;top:526px" width="8" height="5" viewBox="0 0 8 5"><path d="M0 0 H8 L4 5Z" fill="#fff"/></svg>
<div class="t" style="left:1593.00px;top:521.84px;font-size:12px;color:#eaeaea;letter-spacing:-0.384px;">Feedback</div>
<div class="a" style="left:1576px;top:562px;width:339px;height:1px;background:#262626;"></div>
<div class="a" style="left:1789px;top:537px;width:1px;height:26px;background:#262626;"></div>
<div class="a" style="left:1869px;top:537px;width:1px;height:26px;background:#262626;"></div>
<div class="t" style="left:1588.00px;top:544.84px;font-size:12px;color:#eaeaea;letter-spacing:0.037px;">Dig. hall polarity</div>
<div class="t" style="left:1818.80px;top:544.84px;font-size:12px;color:#eaeaea;letter-spacing:-0.241px;">Standard</div>
<div class="t" style="left:1874.00px;top:544.84px;font-size:12px;color:#eaeaea;">-</div>
<div class="a" style="left:1576px;top:588px;width:339px;height:1px;background:#262626;"></div>
<div class="a" style="left:1789px;top:563px;width:1px;height:26px;background:#262626;"></div>
<div class="a" style="left:1869px;top:563px;width:1px;height:26px;background:#262626;"></div>
<div class="t" style="left:1588.00px;top:570.84px;font-size:12px;color:#eaeaea;letter-spacing:0.043px;">Dig. hall filter</div>
<div class="t" style="left:1820.50px;top:570.84px;font-size:12px;color:#eaeaea;letter-spacing:-0.453px;">100 MHz</div>
<div class="t" style="left:1874.00px;top:570.84px;font-size:12px;color:#eaeaea;">-</div>
<div class="a" style="left:1571px;top:444px;width:348px;height:160px;background:transparent;border:5px solid #22b14c"></div>
<div class="t" style="left:1593.50px;top:994.53px;font-size:10px;color:#f0f0f0;letter-spacing:-0.105px;">Add Parameter</div>
<div class="a" style="left:0px;top:1009px;width:1570px;height:1px;background:#2a2a2a;"></div>
<div class="a" style="left:0px;top:1010px;width:1920px;height:6px;background:#383838;"></div>
<div class="a" style="left:0px;top:1016px;width:1920px;height:24px;background:#353535;"></div>
</body></html>
